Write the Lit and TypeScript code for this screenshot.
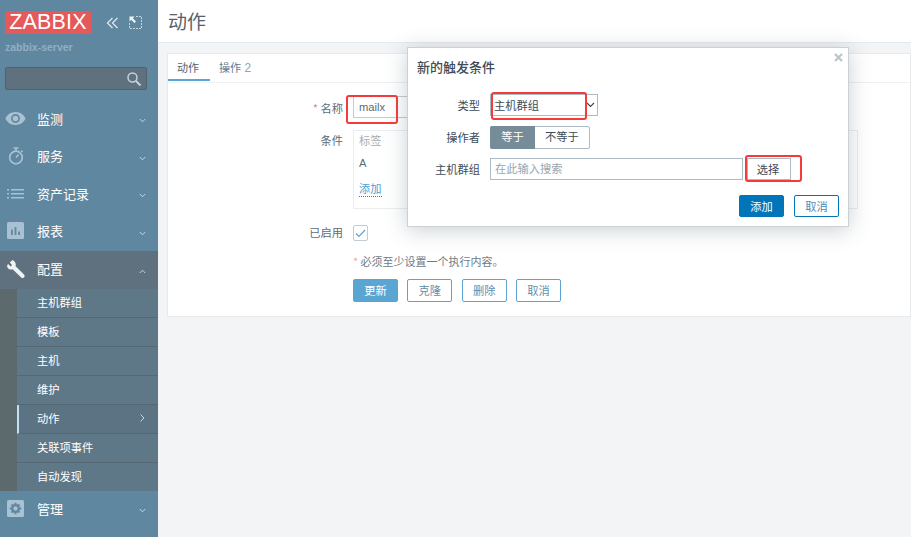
import { LitElement, html, css } from "lit";
import { customElement } from "lit/decorators.js";

const chevDown = html`<svg class="chev" width="7" height="5" viewBox="0 0 7 5"><path d="M.8 1 3.500 3.800 6.200 1" fill="none" stroke="currentColor" stroke-width="1"/></svg>`;
const chevUp = html`<svg class="chev" width="7" height="5" viewBox="0 0 7 5"><path d="M.8 4 3.500 1.200 6.200 4" fill="none" stroke="currentColor" stroke-width="1"/></svg>`;
const chevRight = html`<svg class="chev" width="5" height="8" viewBox="0 0 5 8"><path d="M.5 .5 4 4 .5 7.500" fill="none" stroke="currentColor" stroke-width="1"/></svg>`;

const icons: Record<string, unknown> = {
  eye: html`<svg width="21" height="13" viewBox="0 0 22 14"><path fill-rule="evenodd" d="M11 0C6 0 2 3 0 7c2 4 6 7 11 7s9-3 11-7c-2-4-6-7-11-7Zm0 2.200a4.800 4.800 0 1 1 0 9.600 4.800 4.800 0 0 1 0-9.600Z" fill="#a9c1d2"/><circle cx="11" cy="7" r="3" fill="#a9c1d2"/></svg>`,
  timer: html`<svg width="16" height="18" viewBox="0 0 16 18"><circle cx="8" cy="10.500" r="6.300" fill="none" stroke="#a9c1d2" stroke-width="1.700"/><path d="M5.500 1h5M8 1v3M8 10.500l2.500-3M13 3.500l1.500 1.500" fill="none" stroke="#a9c1d2" stroke-width="1.600"/></svg>`,
  list: html`<svg width="17" height="11" viewBox="0 0 17 11"><path d="M0 1h2v1.400H0zM4 1h13v1.400H4zM0 5h2v1.400H0zM4 5h13v1.400H4zM0 9h2v1.400H0zM4 9h13v1.400H4z" fill="#a9c1d2"/></svg>`,
  chart: html`<svg width="17" height="17" viewBox="0 0 17 17"><rect width="17" height="17" rx="1.500" fill="#a9c1d2"/><path d="M4 7.500h1.800V13H4zM7.600 5h1.800v8H7.600zM11.200 9.500H13V13h-1.800z" fill="#5f87a0"/></svg>`,
  wrench: html`<svg width="18" height="18" viewBox="0 0 18 18"><path d="M5.200.2 2.800 2.600 5 5 3.600 6.400 1.100 4 .1 5.600c-.2 2 1.700 4 3.900 3.900.6 0 1.100-.1 1.600-.3L14.200 17.400c.8.800 2 .8 2.800.1.800-.8.800-2 0-2.900L8.600 6.200c.8-3-1.200-6-3.400-6Z" fill="#eef3f6"/></svg>`,
  gear: html`<svg width="17" height="17" viewBox="0 0 17 17"><rect width="17" height="17" rx="1.500" fill="#a9c1d2"/><circle cx="8.500" cy="8.500" r="3.300" fill="none" stroke="#5f87a0" stroke-width="2.300"/><path d="M8.500 2.800v2M8.500 12.200v2M2.800 8.500h2M12.200 8.500h2M4.500 4.500l1.400 1.400M11.100 11.100l1.400 1.400M12.500 4.500l-1.400 1.400M5.900 11.100l-1.400 1.400" stroke="#5f87a0" stroke-width="1.800"/></svg>`,
};

const subs = ["主机群组", "模板", "主机", "维护", "动作", "关联项事件", "自动发现"];

@customElement("app-root")
export class AppRoot extends LitElement {
  static styles = css`
    :host {
      display: flex;
      width: 911px;
      height: 537px;
      overflow: hidden;
      position: relative;
      background: #f2f4f6;
      font-family: "Noto Sans CJK SC", "Liberation Sans", sans-serif;
      font-size: 11.25px;
      color: #3d4c58;
    }
    .side {
      width: 158px;
      flex: none;
      background: #5f87a0;
      display: flex;
      flex-direction: column;
      color: #fff;
    }
    .brand {
      display: flex;
      align-items: center;
      padding: 11px 0 0 5px;
      height: 23px;
    }
    .logo {
      width: 86px;
      height: 23px;
      background: #e45959;
      color: #fff;
      font: 21.5px/23px "Liberation Sans", sans-serif;
      letter-spacing: 0.2px;
      text-align: center;
      flex: none;
    }
    .brand svg { display: block; }
    .brand .collapse { margin-left: 15px; }
    .brand .kiosk { margin-left: 10px; }
    .server {
      font: bold 10.5px/14px "Liberation Sans", sans-serif;
      color: #93aec0;
      padding: 6px 0 0 5px;
      height: 14px;
    }
    .search {
      margin: 13px 11px 0 5px;
      height: 23px;
      background: #5f717f;
      border: 1px solid #50626f;
      border-radius: 2px;
      box-sizing: border-box;
      display: flex;
      align-items: center;
      justify-content: flex-end;
      padding-right: 4px;
    }
    .menu { margin-top: 11px; }
    .item {
      height: 37.5px;
      box-sizing: border-box;
      padding-bottom: 3px;
      display: flex;
      align-items: center;
      font-size: 13px;
      color: #fff;
    }
    .item .ic {
      width: 31px;
      display: flex;
      justify-content: center;
      flex: none;
    }
    .item .lb { margin-left: 6px; flex: 1; }
    .chev { color: #c5d5df; display: block; }
    .item .chev { margin: 5px 12px 0 0; }
    .item.active { background: #5f717f; height: 38px; }
    .subwrap {
      padding-left: 17px;
      background: #5c6a6e;
    }
    .sub {
      height: 29px;
      box-sizing: border-box;
      background: #5f7888;
      border-bottom: 1px solid #566873;
      display: flex;
      align-items: center;
      padding: 0 13px 2px 20px;
      font-size: 11.25px;
      color: #fff;
      justify-content: space-between;
    }
    .sub:last-child { border-bottom: 0; height: 28px; }
    .sub.current {
      border-left: 2px solid #bfe0f5;
      padding-left: 18px;
      background: #5c7383;
    }
    .main { flex: 1; min-width: 0; display: flex; flex-direction: column; }
    .head {
      height: 43px;
      box-sizing: border-box;
      background: #fff;
      border-bottom: 1px solid #e6e9ec;
      padding-left: 10px;
      font-size: 19px;
      line-height: 42px;
      color: #55626e;
    }
    .card {
      margin: 10px 0 0 9px;
      height: 264px;
      box-sizing: border-box;
      background: #fff;
      border: 1px solid #e8ebee;
    }
    .tabs {
      display: flex;
      height: 29px;
      box-sizing: border-box;
      border-bottom: 1px solid #eef0f2;
    }
    .tab { padding: 0 9px; line-height: 27px; color: #5f7a8e; font-size: 11px; }
    .tab.on { width: 42px; box-sizing: border-box; color: #55626e; border-bottom: 2px solid #5ba5d3; height: 27px; }
    .tab .n { color: #98a2aa; font-family: "Liberation Sans", sans-serif; font-size: 12px; margin-left: 1px; }
    .form {
      display: grid;
      grid-template-columns: 175px 1fr;
      column-gap: 10px;
      padding-top: 13px;
    }
    .lab { text-align: right; color: #5d6b77; line-height: 22px; padding-top: 1px; }
    .lab i { color: #e38a8a; font-style: normal; }
    .name {
      width: 100px;
      height: 22px;
      box-sizing: border-box;
      border: 1px solid #c3ccd3;
      padding-left: 5px;
      font: 11.2px/20px "Liberation Sans", sans-serif;
      color: #5d6b77;
    }
    .cond {
      margin-top: 11px;
      height: 79px;
      width: 505px;
      box-sizing: border-box;
      border: 1px solid #ebeef0;
      padding: 0 5px;
      display: flex;
      flex-direction: column;
      gap: 4px;
      line-height: 19px;
    }
    .cond .t { color: #a6adb3; }
    .cond .a { color: #5d6b77; font: 11.2px/19px "Liberation Sans", sans-serif; }
    .cond .add { color: #4e9fd0; border-bottom: 1px dotted #1f86c9; align-self: flex-start; line-height: 15px; margin-top: 4px; }
    .mt { margin-top: 9px; }
    .en { margin-top: 11px; }
    .check {
      margin-top: 14px;
      width: 15px;
      height: 16px;
      box-sizing: border-box;
      border: 1px solid #c3ccd3;
      border-radius: 2px;
      display: flex;
      align-items: center;
      justify-content: center;
      align-self: center;
    }
    .note { grid-column: 2; margin-top: 9px; color: #707b85; line-height: 18px; font-size: 11px; }
    .note i { color: #f0a8b4; font-style: normal; }
    .btns { grid-column: 2; display: flex; gap: 9.33px; margin-top: 9px; }
    .btn {
      width: 45px;
      height: 23px;
      box-sizing: border-box;
      border: 1px solid #5ba5d3;
      border-radius: 2px;
      color: #5f8fae;
      text-align: center;
      line-height: 21px;
    }
    .btn.pri { background: #5ba5d3; color: #fff; }

    .dlg {
      position: absolute;
      left: 407px;
      top: 47px;
      width: 442px;
      height: 180px;
      box-sizing: border-box;
      background: #fff;
      border: 1px solid #c9d1d6;
      box-shadow: 0 3px 20px rgba(60, 80, 95, 0.28);
      padding: 10px 9px 0 9px;
    }
    .dlg h3 { margin: 0; font-size: 13px; font-weight: 500; line-height: 17px; color: #3d4c58; }
    .close { position: absolute; right: 5px; top: 5px; display: block; }
    .dgrid {
      display: grid;
      grid-template-columns: 63px 1fr;
      grid-template-rows: 22px 23px 22px;
      column-gap: 10px;
      row-gap: 9.5px;
      margin-top: 19px;
      align-items: center;
    }
    .dgrid .l { text-align: right; line-height: 20px; color: #3d4c58; }
    .sel {
      width: 108px;
      height: 22px;
      box-sizing: border-box;
      border: 1px solid #acbbc6;
      display: flex;
      align-items: center;
      justify-content: space-between;
      padding: 0 2px 0 3px;
      line-height: 20px;
    }
    .sel .chk { color: #3d4c58; }
    .seg { display: flex; width: 100px; height: 23px; box-sizing: border-box; border: 1px solid #acbbc6; border-radius: 2px; }
    .seg span { text-align: center; line-height: 18px; }
    .seg .a { width: 45px; margin: -1px 0 -1px -1px; line-height: 20px; background: #768d99; color: #fff; border-radius: 2px 0 0 2px; }
    .seg .b { flex: 1; color: #3d4c58; }
    .row { display: flex; align-items: center; gap: 4px; }
    .inp {
      width: 253px;
      height: 22px;
      box-sizing: border-box;
      border: 1px solid #acbbc6;
      padding-left: 4px;
      color: #9aa5ad;
      line-height: 19px;
    }
    .pick {
      width: 44px;
      height: 22px;
      box-sizing: border-box;
      border: 1px solid #acbbc6;
      padding-right: 2px;
      text-align: center;
      line-height: 21px;
      color: #3d4c58;
    }
    .dbtns { display: flex; justify-content: flex-end; gap: 10px; margin-top: 15px; }
    .dbtn {
      width: 45px;
      height: 22px;
      box-sizing: border-box;
      border: 1px solid #0275b8;
      border-radius: 2px;
      color: #4b8cb5;
      text-align: center;
      line-height: 20px;
    }
    .dbtn.pri { background: #0275b8; color: #fff; }
    .mark {
      position: absolute;
      box-sizing: border-box;
      border: 2px solid #f13c3c;
      border-radius: 3px;
      pointer-events: none;
    }
    .m1 { left: 346px; top: 95px; width: 52px; height: 29px; }
    .m2 { left: 491px; top: 92px; width: 96px; height: 28px; }
    .m3 { left: 745px; top: 155px; width: 57px; height: 27px; }
  `;

  render() {
    const menu = (ic: string, lb: string, cls = "") => html`
      <div class="item ${cls}">
        <span class="ic">${icons[ic]}</span>
        <span class="lb">${lb}</span>
        ${cls ? chevUp : chevDown}
      </div>`;
    return html`
      <aside class="side">
        <div class="brand">
          <div class="logo">ZABBIX</div>
          <svg class="collapse" width="13" height="12" viewBox="0 0 13 12"><path d="M6.500 1 1.500 6l5 5M11.500 1l-5 5 5 5" fill="none" stroke="#dce6ec" stroke-width="1.300"/></svg>
          <svg class="kiosk" width="13" height="13" viewBox="0 0 13 13"><path d="M7 .5h5.500V12.500H.5V7" fill="none" stroke="#c5d5df" stroke-width="1" stroke-dasharray="2 1"/><path d="M.5.5h5l-1.700 1.700L7 5.400 5.400 7 2.200 3.800.5 5.500Z" fill="#eef3f6"/></svg>
        </div>
        <div class="server">zabbix-server</div>
        <div class="search">
          <svg width="16" height="16" viewBox="0 0 16 16"><circle cx="6.500" cy="6.500" r="4.500" fill="none" stroke="#c5d2da" stroke-width="1.500"/><path d="M10 10l4.500 4.500" stroke="#c5d2da" stroke-width="2"/></svg>
        </div>
        <div class="menu">
          ${menu("eye", "监测")}
          ${menu("timer", "服务")}
          ${menu("list", "资产记录")}
          ${menu("chart", "报表")}
          ${menu("wrench", "配置", "active")}
          <div class="subwrap">
            ${subs.map(
              (s) => html`<div class="sub ${s === "动作" ? "current" : ""}"><span>${s}</span>${s === "动作" ? chevRight : ""}</div>`
            )}
          </div>
          ${menu("gear", "管理")}
        </div>
      </aside>
      <main class="main">
        <div class="head">动作</div>
        <section class="card">
          <div class="tabs">
            <div class="tab on">动作</div>
            <div class="tab">操作 <span class="n">2</span></div>
          </div>
          <div class="form">
            <div class="lab"><i>*</i> 名称</div>
            <div class="name">mailx</div>
            <div class="lab mt">条件</div>
            <div class="cond">
              <span class="t">标签</span>
              <span class="a">A</span>
              <span class="add">添加</span>
            </div>
            <div class="lab en">已启用</div>
            <div class="check">
              <svg width="11" height="9" viewBox="0 0 11 9"><path d="M1 4.500 4 7.500 10 1" fill="none" stroke="#5ba5d3" stroke-width="1.200"/></svg>
            </div>
            <div class="note"><i>*</i> 必须至少设置一个执行内容。</div>
            <div class="btns">
              <div class="btn pri">更新</div>
              <div class="btn">克隆</div>
              <div class="btn">删除</div>
              <div class="btn">取消</div>
            </div>
          </div>
        </section>
      </main>
      <div class="dlg">
        <h3>新的触发条件</h3>
        <svg class="close" width="9" height="9" viewBox="0 0 9 9"><path d="M1 1l7 7M8 1l-7 7" stroke="#bcc5cb" stroke-width="2.200"/></svg>
        <div class="dgrid">
          <div class="l">类型</div>
          <div class="sel"><span>主机群组</span><svg class="chk" width="9" height="6" viewBox="0 0 9 6"><path d="M1 1l3.500 3.500L8 1" fill="none" stroke="currentColor" stroke-width="1.200"/></svg></div>
          <div class="l">操作者</div>
          <div class="seg"><span class="a">等于</span><span class="b">不等于</span></div>
          <div class="l">主机群组</div>
          <div class="row"><div class="inp">在此输入搜索</div><div class="pick">选择</div></div>
        </div>
        <div class="dbtns">
          <div class="dbtn pri">添加</div>
          <div class="dbtn">取消</div>
        </div>
      </div>
      <div class="mark m1"></div>
      <div class="mark m2"></div>
      <div class="mark m3"></div>
    `;
  }
}
